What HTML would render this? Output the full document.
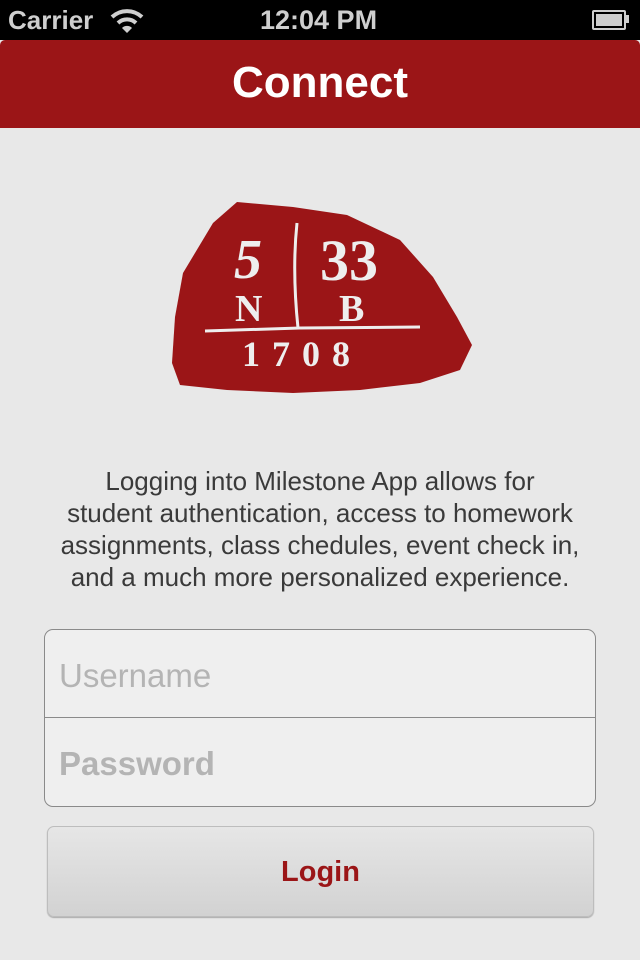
<!DOCTYPE html>
<html><head><meta charset="utf-8"><style>
body{margin:0;width:640px;height:960px;background:#e8e8e8;font-family:"Liberation Sans",sans-serif;position:relative;overflow:hidden}
.sb{position:absolute;top:0;left:0;width:640px;height:40px;background:#000;color:#cfcfcf;font-weight:bold;font-size:26px}
.nav{position:absolute;top:40px;left:0;width:640px;height:88px;background:#9b1517;border-radius:5px 5px 0 0;color:#fff;font-weight:bold;font-size:44px;text-align:center;line-height:86px}
.p{position:absolute;top:465px;left:0;width:640px;text-align:center;font-size:26px;line-height:32px;color:#3a3a3a;white-space:nowrap}
.box{position:absolute;left:44px;top:629px;width:550px;height:176px;border:1px solid #8a8a8a;border-radius:9px;background:#efefef}
.box .d{position:absolute;left:0;top:87px;width:100%;height:1px;background:#8a8a8a}
.f{position:absolute;left:14px;font-size:33px;color:#b4b4b4}
.btn{position:absolute;left:47px;top:826px;width:545px;height:89px;border:1px solid #bdbdbd;border-radius:7px;background:linear-gradient(#e6e6e6,#d2d2d2);color:#9b1517;font-weight:bold;font-size:29px;text-align:center;line-height:90px;box-shadow:0 1px 1px #aaa}
</style></head><body>
<div class="sb"><span style="position:absolute;left:8px;top:5px">Carrier</span>
<svg style="position:absolute;left:110px;top:9px" width="34" height="24" viewBox="0 0 34 24"><path d="M2 8 A22 22 0 0 1 32 8" stroke="#cfcfcf" stroke-width="4" fill="none"/><path d="M8 14 A13 13 0 0 1 26 14" stroke="#cfcfcf" stroke-width="4" fill="none"/><path d="M12 19 L17 24 L22 19 A7 7 0 0 0 12 19Z" fill="#cfcfcf"/></svg>
<span style="position:absolute;left:260px;top:5px;font-size:27px">12:04 PM</span>
<div style="position:absolute;left:592px;top:10px;width:30px;height:16px;border:2px solid #cfcfcf;border-radius:2px"><div style="margin:2px;height:12px;background:#cfcfcf"></div></div>
<div style="position:absolute;left:626px;top:15px;width:3px;height:8px;background:#cfcfcf"></div></div>
<div class="nav">Connect</div>
<svg style="position:absolute;left:0;top:0" width="640" height="420">
<path d="M237 202 L293 207 L347 215 L400 240 L433 277 L457 317 L472 345 L460 370 L420 383 L360 390 L293 393 L227 390 L180 385 L172 363 L175 317 L183 273 L213 223Z" fill="#9b1517"/>
<path d="M297 223 Q292 270 298 328" stroke="#eee" stroke-width="3" fill="none"/>
<path d="M205 331 L300 328 L420 327" stroke="#eee" stroke-width="3" fill="none"/>
<g fill="#eee" font-family="Liberation Serif,serif" font-weight="bold">
<text x="234" y="278" font-size="56" font-style="italic">5</text>
<text x="320" y="280" font-size="58">33</text>
<text x="235" y="321" font-size="38">N</text>
<text x="339" y="321" font-size="38">B</text>
<text x="242" y="366" font-size="36" letter-spacing="12">1708</text>
</g></svg>
<div class="p">Logging into Milestone App allows for<br>student authentication, access to homework<br>assignments, class chedules, event check in,<br>and a much more personalized experience.</div>
<div class="box"><span class="f" style="top:27px">Username</span><div class="d"></div><span class="f" style="top:115px;font-weight:bold">Password</span></div>
<div class="btn">Login</div>
</body></html>
